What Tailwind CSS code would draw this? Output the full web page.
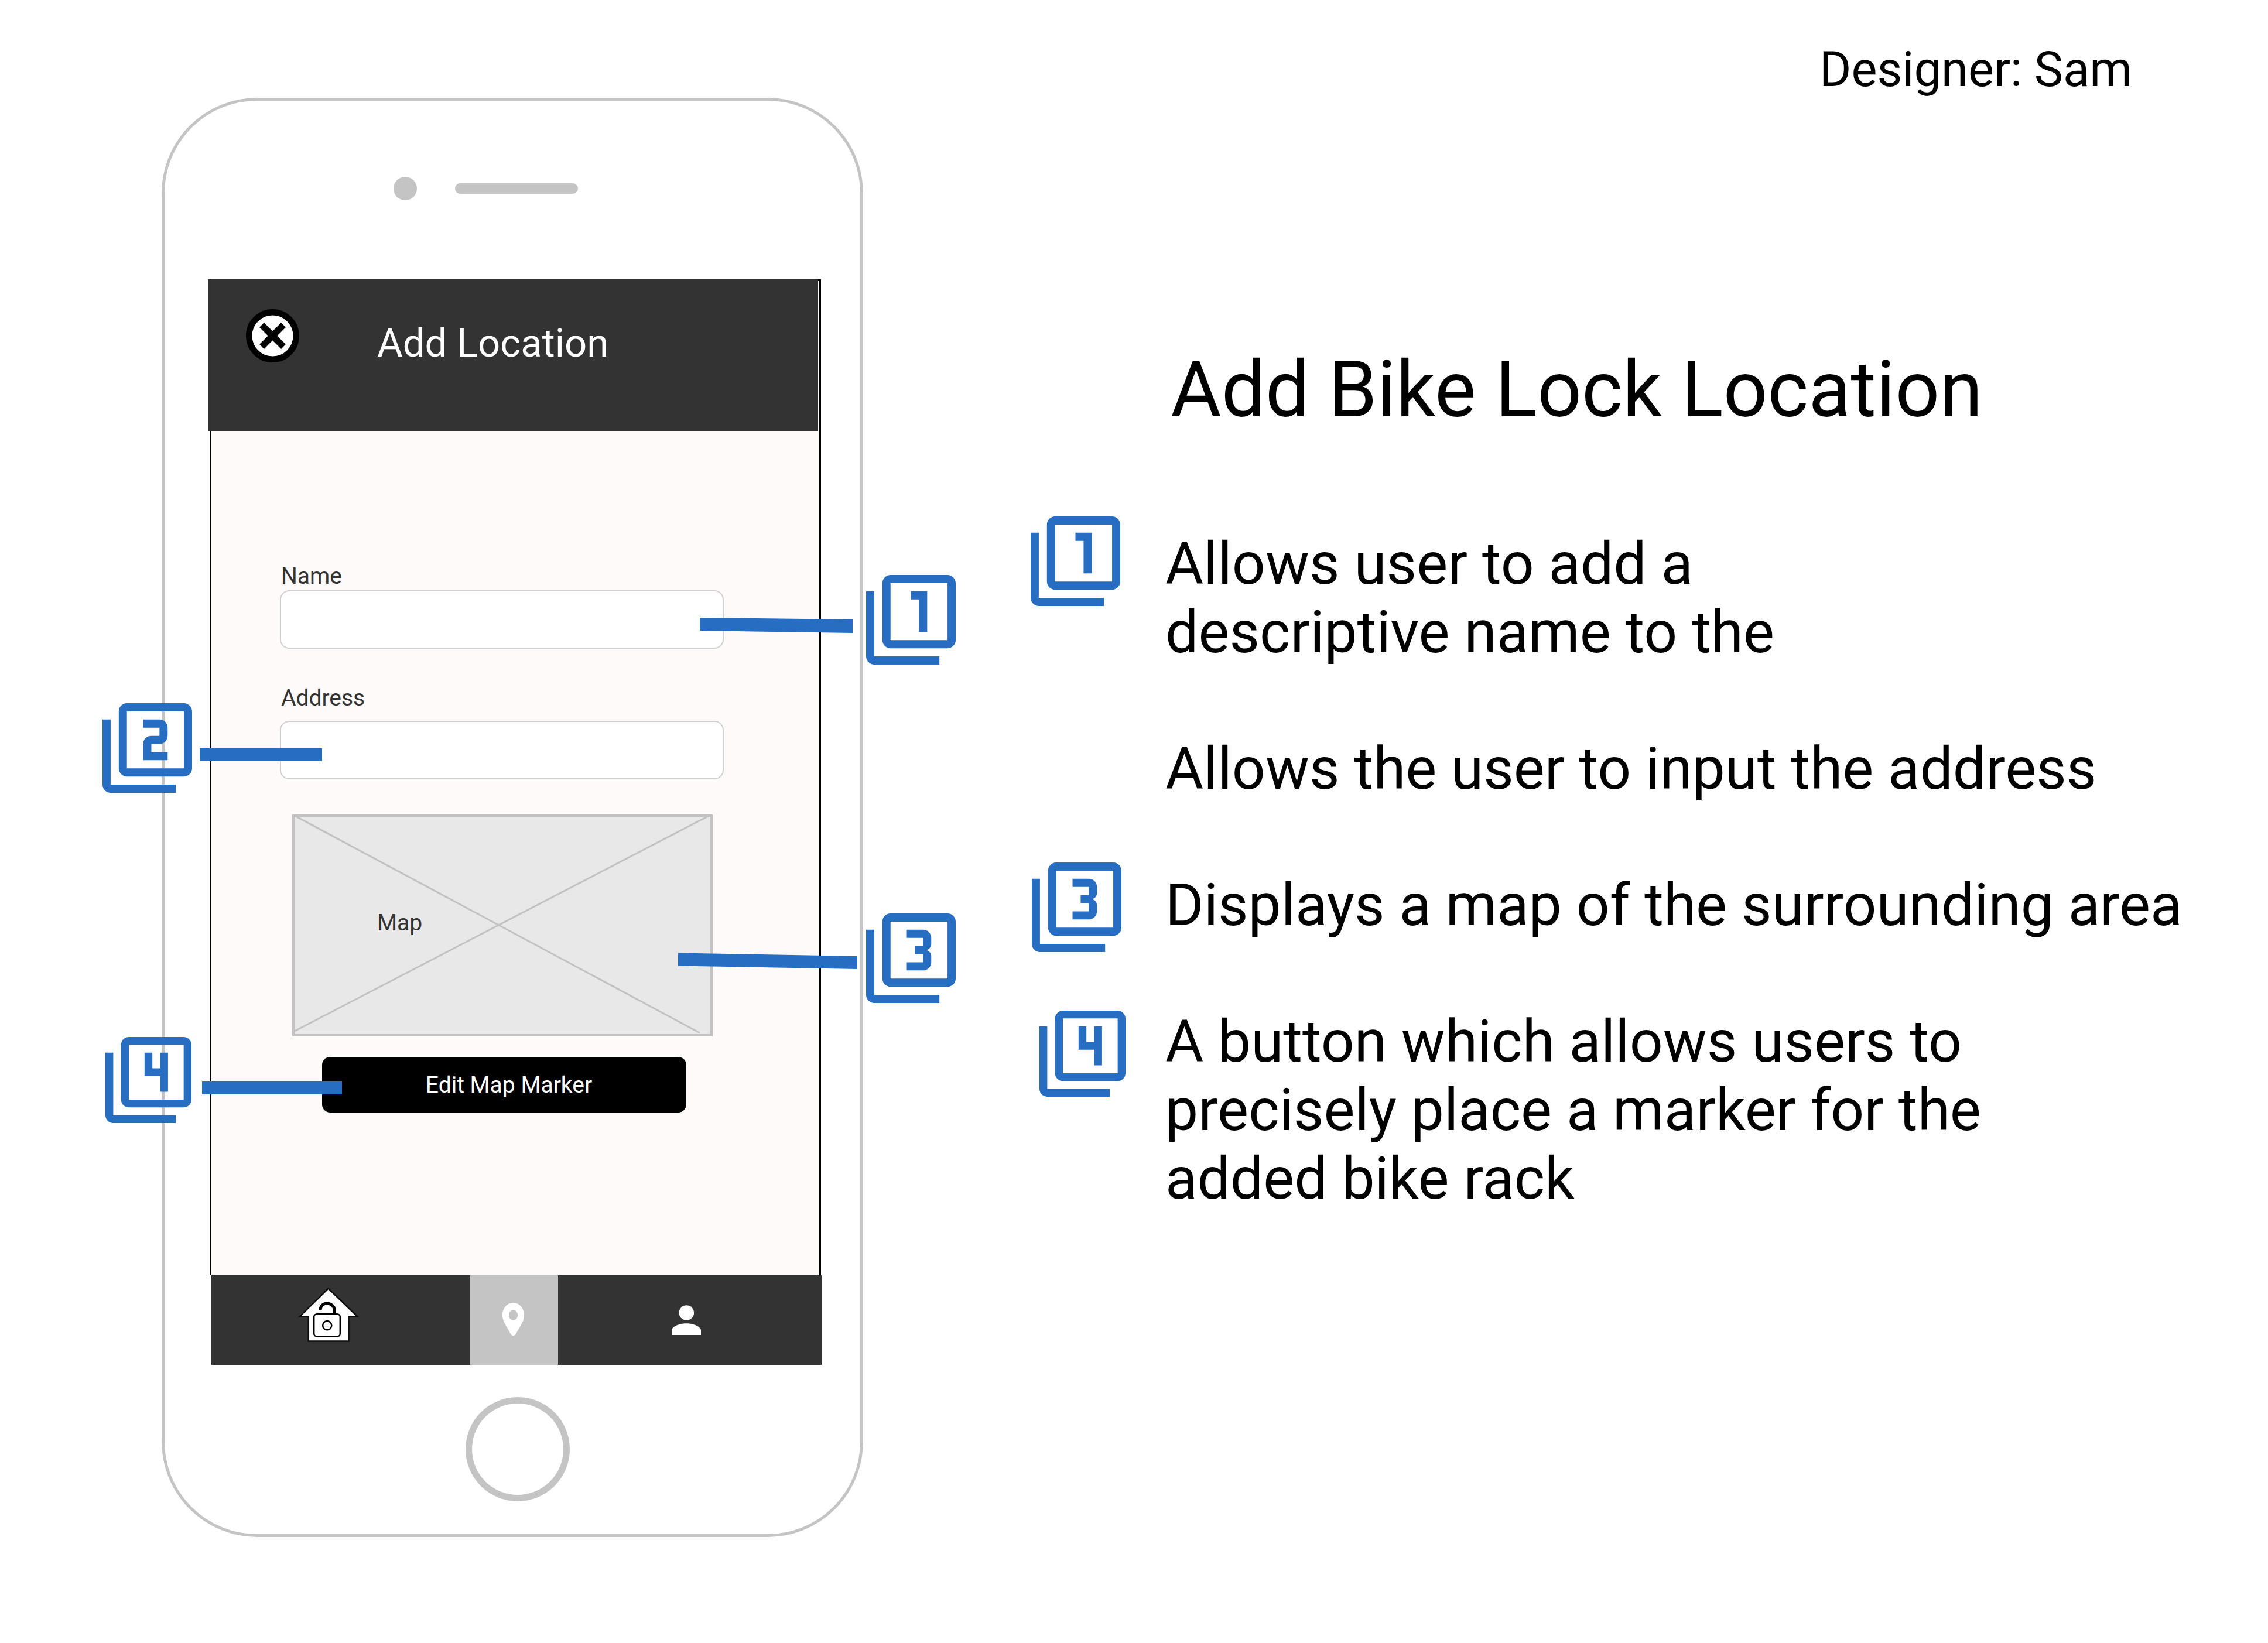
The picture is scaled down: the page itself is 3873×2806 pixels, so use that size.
<!DOCTYPE html>
<html lang="en">
<head>
<meta charset="utf-8">
<meta name="viewport" content="width=device-width, initial-scale=1">
<title>Add Bike Lock Location</title>
<script src="https://cdn.jsdelivr.net/npm/@tailwindcss/browser@4"></script>
</head>
<body class="bg-white font-['Roboto',sans-serif] text-black">

<!-- Numbered badge shapes, shared by the phone callouts and the notes -->
<svg class="hidden" aria-hidden="true">
  <symbol id="frame" viewBox="0 0 22 22">
    <path fill="currentColor" d="M2 4H0v16c0 1.100.9 2 2 2h16v-2H2V4zM20 0H6c-1.100 0-2 .9-2 2v14c0 1.100.9 2 2 2h14c1.100 0 2-.9 2-2V2c0-1.100-.9-2-2-2zm0 16H6V2h14v14z"/>
  </symbol>
  <symbol id="badge-1" viewBox="0 0 22 22">
    <use href="#frame"/>
    <path fill="currentColor" d="M13 14h2V4h-4v2h2v8z"/>
  </symbol>
  <symbol id="badge-2" viewBox="0 0 22 22">
    <use href="#frame"/>
    <path fill="currentColor" d="M16 12h-4v-2h2c1.100 0 2-.89 2-2V6c0-1.110-.9-2-2-2h-4v2h4v2h-2c-1.100 0-2 .89-2 2v4h6v-2z"/>
  </symbol>
  <symbol id="badge-3" viewBox="0 0 22 22">
    <use href="#frame"/>
    <path fill="currentColor" d="M16 12v-1.500c0-.83-.67-1.500-1.500-1.500.83 0 1.500-.67 1.500-1.500V6c0-1.110-.9-2-2-2h-4v2h4v2h-2v2h2v2h-4v2h4c1.100 0 2-.89 2-2z"/>
  </symbol>
  <symbol id="badge-4" viewBox="0 0 22 22">
    <use href="#frame"/>
    <path fill="currentColor" d="M14 14h2V4h-2v4h-2V4h-2v6h4v4z"/>
  </symbol>
</svg>

<main class="flex items-start">

  <!-- Phone -->
  <div class="relative mt-[167px] ml-[276px] flex w-[1198px] shrink-0 flex-col rounded-[163px] border-[5px] border-[#c4c4c4] pb-[56px]">
    <div class="flex h-[305px] items-center gap-[65px] pb-[5px] pl-[391px]">
      <div class="size-10 rounded-full bg-[#c4c4c4]"></div>
      <div class="h-[18px] w-[210px] rounded-full bg-[#c4c4c4]"></div>
    </div>

    <div class="mr-[67px] ml-[77px]">
      <section class="border-x-[3px] border-t-[3px] border-black bg-[#fffafa]">
        <header class="-mt-[3px] mr-0.5 -ml-[6px] flex h-[259px] items-start bg-[#333333] pt-[51px] pl-[65px]">
          <button type="button" aria-label="Close" class="size-[91px]">
            <svg viewBox="0 0 91 91" class="size-full">
              <circle cx="45.500" cy="45.500" r="40.250" fill="#fff" stroke="#000" stroke-width="10.500"/>
              <path d="M27 27l37 37M64 27L27 64" stroke="#000" stroke-width="11"/>
            </svg>
          </button>
          <h2 class="mt-[19px] ml-[133px] text-[67px] leading-[78px] text-white">Add Location</h2>
        </header>

        <form class="flex flex-col pt-[225px] pr-[163px] pb-[278px] pl-[117px]">
          <label for="name" class="pl-0.5 text-[39px] leading-[46px] text-[#333333]">Name</label>
          <input id="name" type="text" class="mt-px h-[100px] w-full rounded-2xl border-2 border-[#d0d0d0] bg-white px-6 text-[39px]">
          <label for="address" class="mt-[61px] pl-0.5 text-[39px] leading-[46px] text-[#333333]">Address</label>
          <input id="address" type="text" class="mt-4 h-[100px] w-full rounded-2xl border-2 border-[#d0d0d0] bg-white px-6 text-[39px]">

          <div class="relative mt-[60px] mr-[19px] ml-[21px] h-[379px] border-4 border-[#c2c2c2] bg-[#e8e8e8] pt-[158px] pl-[141px]">
            <svg viewBox="0 0 710 371" preserveAspectRatio="none" class="absolute inset-0 size-full" aria-hidden="true">
              <path d="M0 -2L692 369M708 -2L0 366" fill="none" stroke="#c2c2c2" stroke-width="3"/>
            </svg>
            <p class="relative text-[39px] leading-[46px] text-[#333333]">Map</p>
          </div>

          <button type="button" class="mt-[35px] mr-[64px] ml-[72px] h-[95px] rounded-[14px] bg-black pl-4 text-[39px] leading-[46px] text-white">Edit Map Marker</button>
        </form>
      </section>

      <nav class="-mr-px ml-[3px] grid h-[153px] grid-cols-[442px_150px_1fr] bg-[#333333]">
        <a href="#home" aria-label="Home" class="flex items-center justify-center pr-[42px] pb-[18px]">
          <svg viewBox="0 0 104 93" class="h-[93px] w-[104px]" fill="none" stroke="#000" stroke-width="2.500">
            <path d="M51.700 1.700L3 49.200h14.800v42.300h68.500V49.200H101z" fill="#fff" stroke="#0c0c0c"/>
            <rect x="27.200" y="45.200" width="44.600" height="38.300" rx="5"/>
            <circle cx="49.700" cy="64.700" r="7.600"/>
            <path d="M38 38.500c0-7 5-11.500 11.500-11.500S62 32 62 38v7" stroke-width="5"/>
          </svg>
        </a>
        <a href="#locations" aria-label="Locations" aria-current="page" class="flex items-center justify-center bg-[#c4c4c4] pr-[3px] pb-[3px]">
          <svg viewBox="0 0 37 56" class="h-[56px] w-[37px]" fill="#fff" fill-rule="evenodd">
            <path d="M18.500 0C8 0 0 9 0 21c0 5 1.200 9 3.500 13.500L14.500 54c2 2.500 6 2.500 8 0l11-19.500C35.800 30 37 26 37 21 37 9 29 0 18.500 0zm0 12.200c4.200 0 7.600 3.900 7.600 8.800s-3.400 8.800-7.600 8.800-7.600-3.900-7.600-8.800 3.400-8.800 7.600-8.800z"/>
          </svg>
        </a>
        <a href="#profile" aria-label="Profile" class="flex items-center justify-center pr-[12px]">
          <svg viewBox="0 0 50 51" class="h-[51px] w-[50px]" fill="#fff">
            <circle cx="25.300" cy="13" r="12.800"/>
            <path d="M0 51V43c0-6 12-11.800 25-11.800S50 37 50 43v8z"/>
          </svg>
        </a>
      </nav>
    </div>

    <div class="mt-[55px] flex justify-center pl-[17px]">
      <div class="size-[178px] rounded-full border-[11px] border-[#c4c4c4]"></div>
    </div>

    <!-- Callouts laid over the phone -->
    <div class="text-[#276dc2]">
      <svg viewBox="0 0 262 26" class="absolute top-[883px] left-[913px] h-[26px] w-[262px]" fill="currentColor" aria-hidden="true"><path d="M1 0L262 3v23L1 22z"/></svg>
      <svg role="img" aria-label="1" class="absolute top-[810px] left-[1198px] size-[153px]"><use href="#badge-1"/></svg>

      <svg viewBox="0 0 209 22" class="absolute top-[1106px] left-[60px] h-[22px] w-[209px]" fill="currentColor" aria-hidden="true"><path d="M0 0h209v22H0z"/></svg>
      <svg role="img" aria-label="2" class="absolute top-[1029px] -left-[106px] size-[153px]"><use href="#badge-2"/></svg>

      <svg viewBox="0 0 306 28" class="absolute top-[1455px] left-[877px] h-[28px] w-[306px]" fill="currentColor" aria-hidden="true"><path d="M0 .500L306 6v22L0 22.500z"/></svg>
      <svg role="img" aria-label="3" class="absolute top-[1388px] left-[1198px] size-[153px]"><use href="#badge-3"/></svg>

      <svg viewBox="0 0 239 22" class="absolute top-[1675px] left-[64px] h-[22px] w-[239px]" fill="currentColor" aria-hidden="true"><path d="M0 0h239v22H0z"/></svg>
      <svg role="img" aria-label="4" class="absolute top-[1599px] -left-[101px] size-[147px]"><use href="#badge-4"/></svg>
    </div>
  </div>

  <!-- Notes -->
  <div class="flex min-w-0 flex-1 flex-col pt-[70px] pl-[286px]">
    <p class="pr-[232px] text-right text-[83px] leading-[97px]">Designer: Sam</p>
    <h1 class="mt-[421px] pl-[239px] text-[133px] leading-[156px]">Add Bike Lock Location</h1>

    <ol class="mt-40 flex flex-col gap-[116px] text-[100px] leading-[117px]">
      <li class="grid grid-cols-[230px_1fr] items-start">
        <svg role="img" aria-label="1" class="-mt-[22px] size-[153px] text-[#276dc2]"><use href="#badge-1"/></svg>
        <p class="max-w-[1200px]">Allows user to add a descriptive name to the</p>
      </li>
      <li class="pl-[230px]">
        <p>Allows the user to input the address</p>
      </li>
      <li class="grid grid-cols-[230px_1fr] items-start">
        <svg role="img" aria-label="3" class="-mt-[14px] -mb-[22px] ml-0.5 size-[153px] text-[#276dc2]"><use href="#badge-3"/></svg>
        <p>Displays a map of the surrounding area</p>
      </li>
      <li class="grid grid-cols-[230px_1fr] items-start">
        <svg role="img" aria-label="4" class="mt-1.5 ml-[15px] size-[147px] text-[#276dc2]"><use href="#badge-4"/></svg>
        <p class="max-w-[1500px]">A button which allows users to precisely place a marker for the added bike rack</p>
      </li>
    </ol>
  </div>
</main>

</body>
</html>
